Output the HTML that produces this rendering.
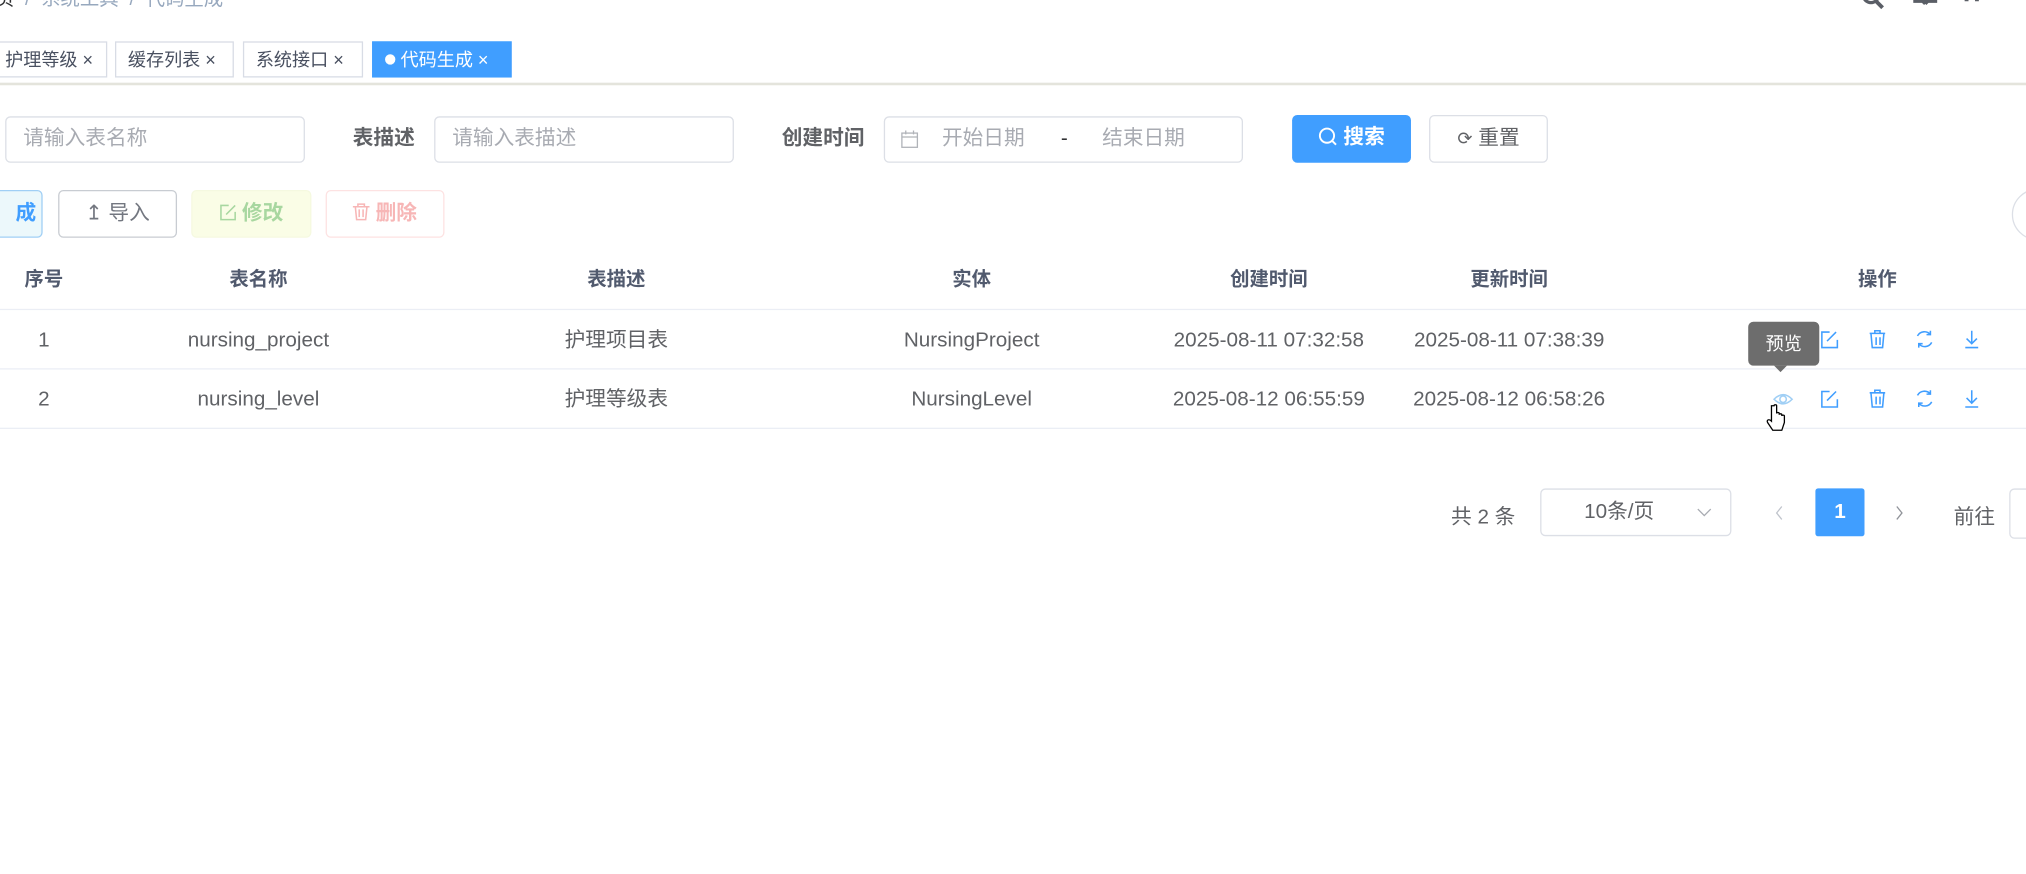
<!DOCTYPE html>
<html><head><meta charset="utf-8"><style>
html,body{margin:0;padding:0;background:#fff;overflow:hidden;width:2026px;height:874px}
#w{position:absolute;left:0;top:0;width:1568px;height:676px;transform:scale(1.2921);transform-origin:0 0;font-family:"Liberation Sans","Noto Sans CJK SC",sans-serif;color:#606266;font-size:16px}
.a{position:absolute;white-space:nowrap}
.tab{position:absolute;top:32px;height:28px;border:1px solid #d8dce5;font-size:14px;line-height:26px;color:#495060;box-sizing:border-box;padding:0 8px;white-space:nowrap}
.inp{position:absolute;top:90px;height:36px;border:1px solid #dcdfe6;border-radius:4px;box-sizing:border-box;color:#a8abb2;line-height:34px;padding-left:13px}
.lab{position:absolute;top:90px;line-height:36px;font-weight:bold;color:#606266}
.btn{position:absolute;top:147px;height:37px;border-radius:4px;box-sizing:border-box;line-height:35px;text-align:center;font-weight:bold;white-space:nowrap}
.th{position:absolute;top:205px;line-height:24px;font-size:15px;font-weight:bold;color:#515a6e;transform:translateX(-50%);white-space:nowrap}
.td{position:absolute;transform:translateX(-50%);color:#606266;line-height:24px;white-space:nowrap}
.hl{position:absolute;left:0;width:1568px;height:1px;background:#ebeef5}
svg.i{position:absolute}
</style></head><body><div id="w">
<div class="a" style="left:-4px;top:-12px;color:#97a8be;font-size:15px"><span style="color:#303133">页</span> &nbsp;/&nbsp; 系统工具 &nbsp;/&nbsp; 代码生成</div>
<svg class="i" style="left:1440px;top:-7px" width="22" height="16"><circle cx="8" cy="3" r="6" fill="none" stroke="#5a5e66" stroke-width="2.5"/><path d="M12 8l5 5" stroke="#5a5e66" stroke-width="3"/></svg>
<svg class="i" style="left:1480px;top:-7px" width="20" height="16"><path d="M2 0v8h8M18 0v8h-8M5 5l5 5M15 5l-5 5" stroke="#5a5e66" stroke-width="2.5" fill="none"/></svg>
<svg class="i" style="left:1518px;top:-7px" width="16" height="16"><path d="M4 0v8M12 0v8" stroke="#5a5e66" stroke-width="3"/></svg>
<div class="tab" style="left:-5px;width:88px">护理等级 ×</div>
<div class="tab" style="left:89px;width:92px;padding-left:9px">缓存列表 ×</div>
<div class="tab" style="left:188px;width:93px;padding-left:9px">系统接口 ×</div>
<div class="tab" style="left:288px;width:108px;background:#409eff;border-color:#409eff;color:#fff;padding-left:9px"><span style="display:inline-block;width:8px;height:8px;border-radius:50%;background:#fff;margin-right:4px;vertical-align:1px"></span>代码生成 ×</div>
<div style="position:absolute;left:0;top:64px;width:1568px;height:2px;background:#e4e4dc"></div>
<div class="inp" style="left:4px;width:232px">请输入表名称</div>
<div class="lab" style="left:273px">表描述</div>
<div class="inp" style="left:336px;width:232px">请输入表描述</div>
<div class="lab" style="left:605px">创建时间</div>
<div class="inp" style="left:684px;width:278px;padding:0"><svg class="i" style="left:12px;top:10px" width="14" height="14"><rect x="1" y="2" width="12" height="11" fill="none" stroke="#b0b3b8"/><path d="M1 5h12M4 0v3M10 0v3" stroke="#b0b3b8"/></svg><span class="a" style="left:44px">开始日期</span><span class="a" style="left:136px;color:#303133">-</span><span class="a" style="left:168px">结束日期</span></div>
<div class="btn" style="left:1000px;top:89px;width:92px;background:#409eff;color:#fff"><svg style="vertical-align:-2px" width="15" height="15"><circle cx="7" cy="7" r="5.5" fill="none" stroke="#fff" stroke-width="1.5"/><path d="M11 11l3 3" stroke="#fff" stroke-width="1.5"/></svg> 搜索</div>
<div class="btn" style="left:1106px;top:89px;width:92px;border:1px solid #dcdfe6;color:#606266;font-weight:normal"><span style="font-size:14px">⟳</span> 重置</div>
<div class="btn" style="left:-10px;width:43px;background:#ecf8fb;border:1px solid #a0cff5;color:#409eff;text-align:right;padding-right:4px">成</div>
<div class="btn" style="left:45px;width:92px;border:1px solid #c8ccd2;color:#737780;font-weight:normal">↥ 导入</div>
<div class="btn" style="left:148px;width:93px;background:#fafde6;border:1px solid #f5f9e0;color:#a8d7a0"><svg style="vertical-align:-1px" width="13" height="13"><path d="M7 1H1v11h11V6M5 8l7-7" fill="none" stroke="#a8d7a0" stroke-width="1.2"/></svg> 修改</div>
<div class="btn" style="left:252px;width:92px;background:#fff;border:1px solid #fde2e2;color:#f7b6b6"><svg style="vertical-align:-1px" width="13" height="14"><path d="M0 3h13M4 3V1h5v2M2 3l1 10h7l1-10M5 5v6M8 5v6" fill="none" stroke="#f7b6b6" stroke-width="1.2"/></svg> 删除</div>
<div style="position:absolute;left:1557px;top:146px;width:38px;height:38px;border-radius:50%;border:1px solid #dcdfe6"></div>
<div class="th" style="left:34px">序号</div><div class="th" style="left:200px">表名称</div><div class="th" style="left:477px">表描述</div><div class="th" style="left:752px">实体</div><div class="th" style="left:982px">创建时间</div><div class="th" style="left:1168px">更新时间</div><div class="th" style="left:1453px">操作</div>
<div class="hl" style="top:239px"></div><div class="hl" style="top:285px"></div><div class="hl" style="top:331px"></div>
<div class="td" style="left:34px;top:252px">1</div><div class="td" style="left:200px;top:252px">nursing_project</div><div class="td" style="left:477px;top:252px">护理项目表</div><div class="td" style="left:752px;top:252px">NursingProject</div><div class="td" style="left:982px;top:252px">2025-08-11 07:32:58</div><div class="td" style="left:1168px;top:252px">2025-08-11 07:38:39</div>
<div class="td" style="left:34px;top:298px">2</div><div class="td" style="left:200px;top:298px">nursing_level</div><div class="td" style="left:477px;top:298px">护理等级表</div><div class="td" style="left:752px;top:298px">NursingLevel</div><div class="td" style="left:982px;top:298px">2025-08-12 06:55:59</div><div class="td" style="left:1168px;top:298px">2025-08-12 06:58:26</div>
<svg class="i" style="left:0;top:0" width="1568" height="340">
<g fill="none" stroke="#409eff" stroke-width="1.2">
<g id="r"><path d="M1416 257h-6v12h12v-6M1414 264l7-7"/><path d="M1447 258h12M1451 258v-2h4v2M1448 258l1 11h8l1-11M1452 261v6M1455 261v6"/><path d="M1484 260a6 6 0 0 1 10-1M1495 265a6 6 0 0 1-10 1M1494 256v3h-3M1485 269v-3h3"/><path d="M1526 256v9M1522 262l4 4 4-4M1521 269h10"/></g>
<use href="#r" y="46"/>
<path d="M1373 309q7-7 14 0q-7 7-14 0z" stroke="#a0cff5"/><circle cx="1380" cy="309" r="2.5" stroke="#a0cff5"/>
</g>
<path d="M1371 314v12c-2-2-4-1-3 1l4 6h7l2-6v-5c0-1-2-1-2 0v-1c0-1-2-1-2 0v-1c0-1-2-1-2 0v-6c0-1-2-1-2 0z" fill="#fff" stroke="#000" stroke-width="1"/>
</svg>
<div style="position:absolute;left:1353px;top:249px;width:55px;height:34px;background:#6d6d6d;border-radius:4px;color:#fff;font-size:14px;line-height:34px;text-align:center">预览</div>
<div style="position:absolute;left:1373px;top:283px;border:5px solid transparent;border-top-color:#6d6d6d"></div>
<div class="a" style="left:1123px;top:386px">共 2 条</div>
<div style="position:absolute;left:1192px;top:378px;width:148px;height:37px;border:1px solid #dcdfe6;border-radius:4px;box-sizing:border-box;line-height:35px;padding-left:33px">10条/页<svg class="i" style="right:14px;top:14px" width="12" height="8"><path d="M1 1l5 5 5-5" fill="none" stroke="#a8abb2"/></svg></div>
<svg class="i" style="left:1373px;top:391px" width="8" height="12"><path d="M6 1L2 6l4 5" fill="none" stroke="#c0c4cc"/></svg>
<div style="position:absolute;left:1405px;top:378px;width:38px;height:37px;background:#409eff;border-radius:2px;color:#fff;font-weight:bold;line-height:37px;text-align:center">1</div>
<svg class="i" style="left:1466px;top:391px" width="8" height="12"><path d="M2 1l4 5-4 5" fill="none" stroke="#909399"/></svg>
<div class="a" style="left:1512px;top:386px">前往</div>
<div style="position:absolute;left:1555px;top:378px;width:40px;height:37px;border:1px solid #dcdfe6;border-radius:4px"></div>
</div></body></html>
